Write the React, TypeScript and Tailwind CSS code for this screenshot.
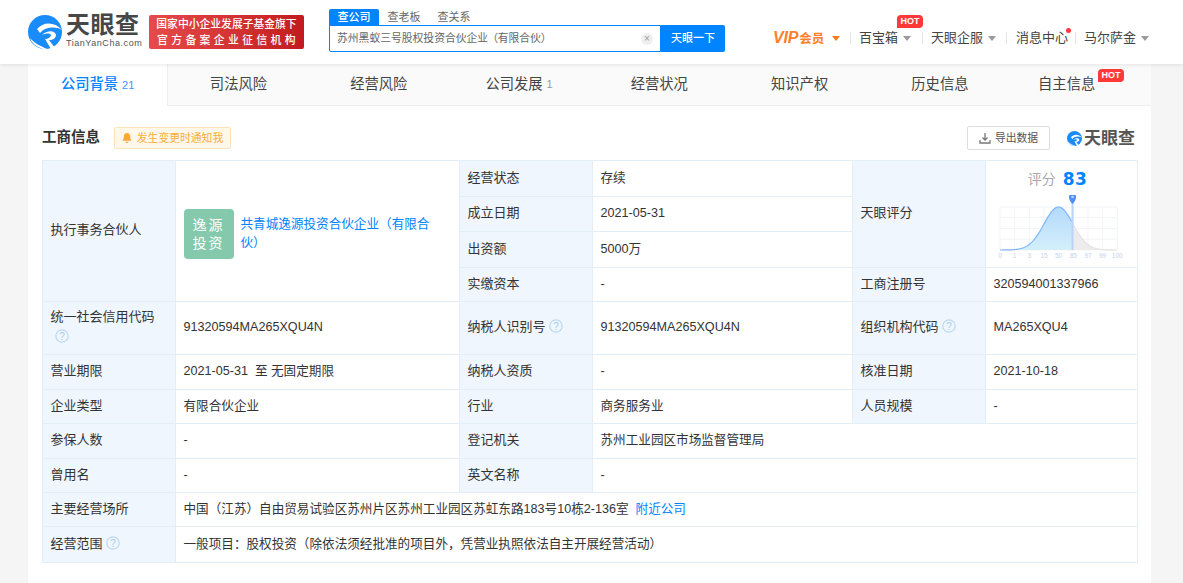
import React from "react";

const font = { fontFamily: '"Liberation Sans","Noto Sans CJK SC",sans-serif' };

function Logo({ size = 34 }: { size?: number }) {
  return (
    <svg width={size} height={size} viewBox="0 0 34 34" className="shrink-0">
      <circle cx="17" cy="17" r="17" fill="#1a8cfa" />
      <path d="M9 14C15 7 26 6 34 15C27 11 17 12 12 18Z" fill="#fff" />
      <path d="M14 20C19 15 27 15 28 20C28 23 25 25 21 25L27 33L23 34L17 24C20 24 23 22 23 20C22 18 18 18 14 20Z" fill="#fff" />
      <path d="M2 23C7 29 13 31 19 34L15 34C9 32 4 29 2 23Z" fill="#fff" />
    </svg>
  );
}

function Caret({ color = "#9a9a9a", w = 8 }: { color?: string; w?: number }) {
  return (
    <svg width={w} height="5" viewBox="0 0 8 5" className="shrink-0">
      <path d="M0 0H8L4 5Z" fill={color} />
    </svg>
  );
}

function Help() {
  return (
    <svg width="14" height="14" viewBox="0 0 14 14" className="inline-block align-[-2px]">
      <circle cx="7" cy="7" r="6.2" fill="none" stroke="#bcd9f2" strokeWidth="1.2" />
      <text x="7" y="10.5" textAnchor="middle" fontSize="10" fill="#a9cbe8" fontFamily="Liberation Sans">?</text>
    </svg>
  );
}

function Sep() {
  return <span className="block w-px h-3 bg-[#e4e4e4] shrink-0" />;
}

function Hot({ className }: { className: string }) {
  return (
    <span className={`absolute h-[13px] w-[26px] rounded-t-[4px] rounded-br-[4px] bg-[#ff3838] text-white text-[9px] font-bold leading-[13px] text-center ${className}`}>
      HOT
    </span>
  );
}

function Chart() {
  const labels = ["0", "1", "3", "15", "50", "85", "97", "99", "100"];
  const xs = [0, 14.6, 29.3, 44, 58.6, 73.3, 88, 102.6, 117.3];
  const bell = (x: number) => 43 * (1 - Math.exp(-((x - 58.5) ** 2) / 420));
  const range = (a: number, b: number) => {
    const out: string[] = [];
    for (let x = a; x <= b; x += 1) out.push(`${x} ${bell(x).toFixed(2)}`);
    return out.join(" L");
  };
  const curve = `M${range(0, 72)}`;
  const tail = `M${range(72, 117)}`;
  return (
    <svg width="134" height="72" viewBox="-7 -12 134 72" className="block">
      {xs.map((x) => (
        <line key={x} x1={x} x2={x} y1="0" y2="43" stroke="#f1f3f6" />
      ))}
      {[0, 10.7, 21.5, 32.2, 43].map((y) => (
        <line key={y} x1="0" x2="117" y1={y} y2={y} stroke="#f1f3f6" />
      ))}
      <defs>
        <linearGradient id="fillb" x1="0" y1="0" x2="0" y2="1">
          <stop offset="0" stopColor="#b3d9fb" />
          <stop offset="1" stopColor="#d4effa" />
        </linearGradient>
      </defs>
      <path d={`${curve} L72 43 Z`} fill="url(#fillb)" />
      <path d={`${tail} L72 43 Z`} fill="#ececec" />
      <path d={curve} fill="none" stroke="#7fb8f9" strokeWidth="1.2" />
      <path d={tail} fill="none" stroke="#e4e4e4" strokeWidth="1.2" />
      <line x1="72.5" x2="72.5" y1="-4" y2="43" stroke="#b9d3fb" strokeWidth="2" />
      <path d="M72.5 -3 C70 -5 69 -8 69 -10 A3.5 3.5 0 0 1 76 -10 C76 -8 75 -5 72.5 -3Z" fill="#4d8ff5" />
      <circle cx="72.5" cy="-10" r="1.3" fill="#bcd6fb" />
      {labels.map((l, i) => (
        <text key={l} x={xs[i]} y="51" textAnchor="middle" fontSize="6.5" fill="#c2d4ee" fontFamily="Liberation Sans">
          {l}
        </text>
      ))}
    </svg>
  );
}

function Th({ children, rowSpan }: { children: React.ReactNode; rowSpan?: number }) {
  return (
    <td rowSpan={rowSpan} className="border border-[#e4eef6] bg-[#eff6fd] pl-[7.5px] pr-2 pb-[2px] text-[13px] leading-[20px] text-[#333] align-middle">
      {children}
    </td>
  );
}

function Td({ children, rowSpan, colSpan }: { children: React.ReactNode; rowSpan?: number; colSpan?: number }) {
  return (
    <td rowSpan={rowSpan} colSpan={colSpan} className="border border-[#e4eef6] bg-white pl-[7.5px] pr-2 pb-[2px] text-[12.6px] leading-[20px] text-[#333] align-middle">
      {children}
    </td>
  );
}

const tabs: [string, string?][] = [
  ["公司背景", "21"],
  ["司法风险"],
  ["经营风险"],
  ["公司发展", "1"],
  ["经营状况"],
  ["知识产权"],
  ["历史信息"],
];

export default function App() {
  return (
    <div style={font} className="w-[1183px] h-[583px] overflow-hidden bg-[#f5f5f5] text-[#333]">
      {/* header */}
      <header className="relative z-10 h-16 bg-white shadow-[0_1px_4px_rgba(0,0,0,0.09)] flex items-center pl-7">
        <Logo />
        <div className="ml-1 w-[78px] -mt-[3px]">
          <div className="text-[24px] leading-[26px] font-bold text-[#474747] tracking-[0.5px] whitespace-nowrap">天眼查</div>
          <div className="text-[9px] leading-[11px] text-[#555] tracking-[0.55px] whitespace-nowrap">TianYanCha.com</div>
        </div>
        <div className="ml-[5px] w-[155px] h-[34px] rounded-[2px] bg-gradient-to-r from-[#e64a4a] to-[#c21a1e] text-white text-[10.8px] font-medium leading-[16px] text-center whitespace-nowrap flex flex-col justify-center">
          <div>国家中小企业发展子基金旗下</div>
          <div className="tracking-[3.4px] pl-[3px]">官方备案企业征信机构</div>
        </div>
        <div className="ml-[25px] w-[396px] self-start pt-[9px]">
          <div className="flex h-4 text-[11px] leading-4 text-[#666]">
            <span className="w-[50px] text-center bg-[#0084ff] text-white rounded-t-[2px] font-medium">查公司</span>
            <span className="w-[50px] text-center">查老板</span>
            <span className="w-[50px] text-center">查关系</span>
          </div>
          <div className="flex h-[27px]">
            <div className="w-[332px] border border-[#0084ff] bg-white flex items-center pl-[7px] pr-[7px] text-[10.8px] text-[#666] rounded-bl-[2px]">
              <span className="flex-1 whitespace-nowrap">苏州黑蚁三号股权投资合伙企业<span className="-ml-[1px] tracking-[-0.1px]">（有限合伙）</span></span>
              <span className="w-3 h-3 rounded-full bg-[#efefef] text-[#999] text-[10px] leading-3 text-center">×</span>
            </div>
            <div className="w-[64px] bg-[#0084ff] text-white text-[11px] font-medium flex items-center justify-center rounded-r-[2px]">天眼一下</div>
          </div>
        </div>
        <nav className="ml-[48px] mt-[12px] flex items-center text-[13px] text-[#444] whitespace-nowrap">
          <span className="text-[#ff7f2a] font-bold text-[12.5px] w-[53px]"><i className="text-[16px] tracking-[-0.2px]">VIP</i><span className="ml-[1px]">会员</span></span>
          <span className="ml-[6px]"><Caret color="#ff7a1f" /></span>
          <span className="ml-[10px]"><Sep /></span>
          <span className="ml-[8px] relative w-[39px]">百宝箱<Hot className="left-[38px] -top-[13px]" /></span>
          <span className="ml-[5px]"><Caret /></span>
          <span className="ml-[11px]"><Sep /></span>
          <span className="ml-[8px] w-[52px]">天眼企服</span>
          <span className="ml-[5px]"><Caret /></span>
          <span className="ml-[10px]"><Sep /></span>
          <span className="ml-[9px] w-[52px] relative">消息中心<span className="absolute left-[50px] top-[0px] w-[5px] h-[5px] rounded-full bg-[#ff3838]" /></span>
          <span className="ml-[7px]"><Sep /></span>
          <span className="ml-[8px] w-[52px]">马尔萨金</span>
          <span className="ml-[5px]"><Caret /></span>
        </nav>
      </header>

      {/* main */}
      <main className="ml-7 w-[1123px] h-[519px] bg-white">
        <div className="flex h-[42px] bg-[#fafafa] border-b border-[#eeeeee] text-[14.3px] text-[#444]">
          {tabs.map(([t, n], i) => (
            <div
              key={t}
              className={`w-[140.3px] flex items-center justify-center whitespace-nowrap ${i === 0 ? "bg-white text-[#0084ff] font-medium border-r border-[#eeeeee] -mb-px" : ""}`}
            >
              {t}
              {n && <span className={`ml-1 text-[11px] ${i === 0 ? "text-[#3b96f5] font-normal" : "text-[#999]"}`}>{n}</span>}
            </div>
          ))}
          <div className="relative flex-1 flex items-center pl-[28px]">
            自主信息
            <Hot className="left-[88px] top-[5px]" />
          </div>
        </div>

        <div className="pl-[14px] pt-[20px] w-[1109px]">
          <div className="flex items-center h-6 mb-[10px]">
            <span className="text-[14.5px] font-bold text-[#333]">工商信息</span>
            <span className="ml-[14px] h-[22px] w-[117px] rounded-[2px] border border-[#ffe3b8] bg-[#fff7ea] text-[#fcae3b] text-[10.8px] flex items-center justify-center gap-[5px] whitespace-nowrap">
              <svg width="10" height="12" viewBox="0 0 11 12"><path d="M5.5 0.5C3 0.5 2 2.5 2 4.5C2 7 1 8 0.5 9H10.5C10 8 9 7 9 4.5C9 2.5 8 0.5 5.5 0.5Z M4 10H7C7 11 6.3 11.6 5.5 11.6S4 11 4 10Z" fill="#fca92f" /></svg>
              发生变更时通知我
            </span>
            <span className="ml-auto h-6 w-[83px] rounded-[2px] border border-[#dddddd] bg-white text-[10.8px] text-[#555] flex items-center justify-center gap-[4px] whitespace-nowrap">
              <svg width="12" height="12" viewBox="0 0 12 12" fill="none" stroke="#777" strokeWidth="1.3"><path d="M6 1V8M3.5 5.5L6 8L8.5 5.5M1 8V11H11V8" /></svg>
              导出数据
            </span>
            <span className="ml-[17px] flex items-center gap-[2px] mr-[2px] mt-[1px]">
              <Logo size={15} />
              <span className="text-[17px] leading-4 font-bold text-[#555] whitespace-nowrap">天眼查</span>
            </span>
          </div>

          <table className="w-[1095px] table-fixed border-collapse">
            <colgroup>
              <col className="w-[133px]" />
              <col className="w-[284px]" />
              <col className="w-[133px]" />
              <col className="w-[260px]" />
              <col className="w-[133px]" />
              <col className="w-[152px]" />
            </colgroup>
            <tbody>
              <tr className="h-[36px]">
                <Th rowSpan={4}>执行事务合伙人</Th>
                <Td rowSpan={4}>
                  <div className="flex items-center gap-[7px] mt-[7px]">
                    <div className="w-[50px] h-[50px] shrink-0 rounded-[4px] bg-[#84c9ac] text-white text-[14px] leading-[18px] tracking-[2px] text-center flex items-center justify-center">
                      逸源<br />投资
                    </div>
                    <span className="w-[194px] text-[#0084ff] leading-[19px]">共青城逸源投资合伙企业（有限合伙）</span>
                  </div>
                </Td>
                <Th>经营状态</Th>
                <Td>存续</Td>
                <Th rowSpan={3}>天眼评分</Th>
                <td rowSpan={3} className="border border-[#e4eef6] bg-white align-top p-0">
                  <div className="flex flex-col items-center">
                    <div className="h-[34px] flex items-center gap-[7px] -ml-[8px] pt-[2px]">
                      <span className="text-[14px] text-[#aaaaaa]">评分</span>
                      <span className="mt-[2px] text-[17px] font-bold text-[#0084ff] font-['DejaVu_Sans'] tracking-[0.5px]">83</span>
                    </div>
                    <div className="-ml-[3px]"><Chart /></div>
                  </div>
                </td>
              </tr>
              <tr className="h-[35px]">
                <Th>成立日期</Th>
                <Td>2021-05-31</Td>
              </tr>
              <tr className="h-[36px]">
                <Th>出资额</Th>
                <Td>5000万</Td>
              </tr>
              <tr className="h-[34px]">
                <Th>实缴资本</Th>
                <Td>-</Td>
                <Th>工商注册号</Th>
                <Td>320594001337966</Td>
              </tr>
              <tr className="h-[53px]">
                <Th>统一社会信用代码<div className="pl-[4px]"><Help /></div></Th>
                <Td>91320594MA265XQU4N</Td>
                <Th>纳税人识别号 <Help /></Th>
                <Td>91320594MA265XQU4N</Td>
                <Th>组织机构代码 <Help /></Th>
                <Td>MA265XQU4</Td>
              </tr>
              <tr className="h-[35px]">
                <Th>营业期限</Th>
                <Td>2021-05-31&nbsp; 至 无固定期限</Td>
                <Th>纳税人资质</Th>
                <Td>-</Td>
                <Th>核准日期</Th>
                <Td>2021-10-18</Td>
              </tr>
              <tr className="h-[34px]">
                <Th>企业类型</Th>
                <Td>有限合伙企业</Td>
                <Th>行业</Th>
                <Td>商务服务业</Td>
                <Th>人员规模</Th>
                <Td>-</Td>
              </tr>
              <tr className="h-[35px]">
                <Th>参保人数</Th>
                <Td>-</Td>
                <Th>登记机关</Th>
                <Td colSpan={3}>苏州工业园区市场监督管理局</Td>
              </tr>
              <tr className="h-[34px]">
                <Th>曾用名</Th>
                <Td>-</Td>
                <Th>英文名称</Th>
                <Td colSpan={3}>-</Td>
              </tr>
              <tr className="h-[34px]">
                <Th>主要经营场所</Th>
                <Td colSpan={5}>
                  中国（江苏）自由贸易试验区苏州片区苏州工业园区苏虹东路183号10栋2-136室<span className="ml-[7px] text-[#0084ff]">附近公司</span>
                </Td>
              </tr>
              <tr className="h-[36px]">
                <Th>经营范围 <Help /></Th>
                <Td colSpan={5}>一般项目：股权投资（除依法须经批准的项目外，凭营业执照依法自主开展经营活动）</Td>
              </tr>
            </tbody>
          </table>
        </div>
      </main>
    </div>
  );
}
